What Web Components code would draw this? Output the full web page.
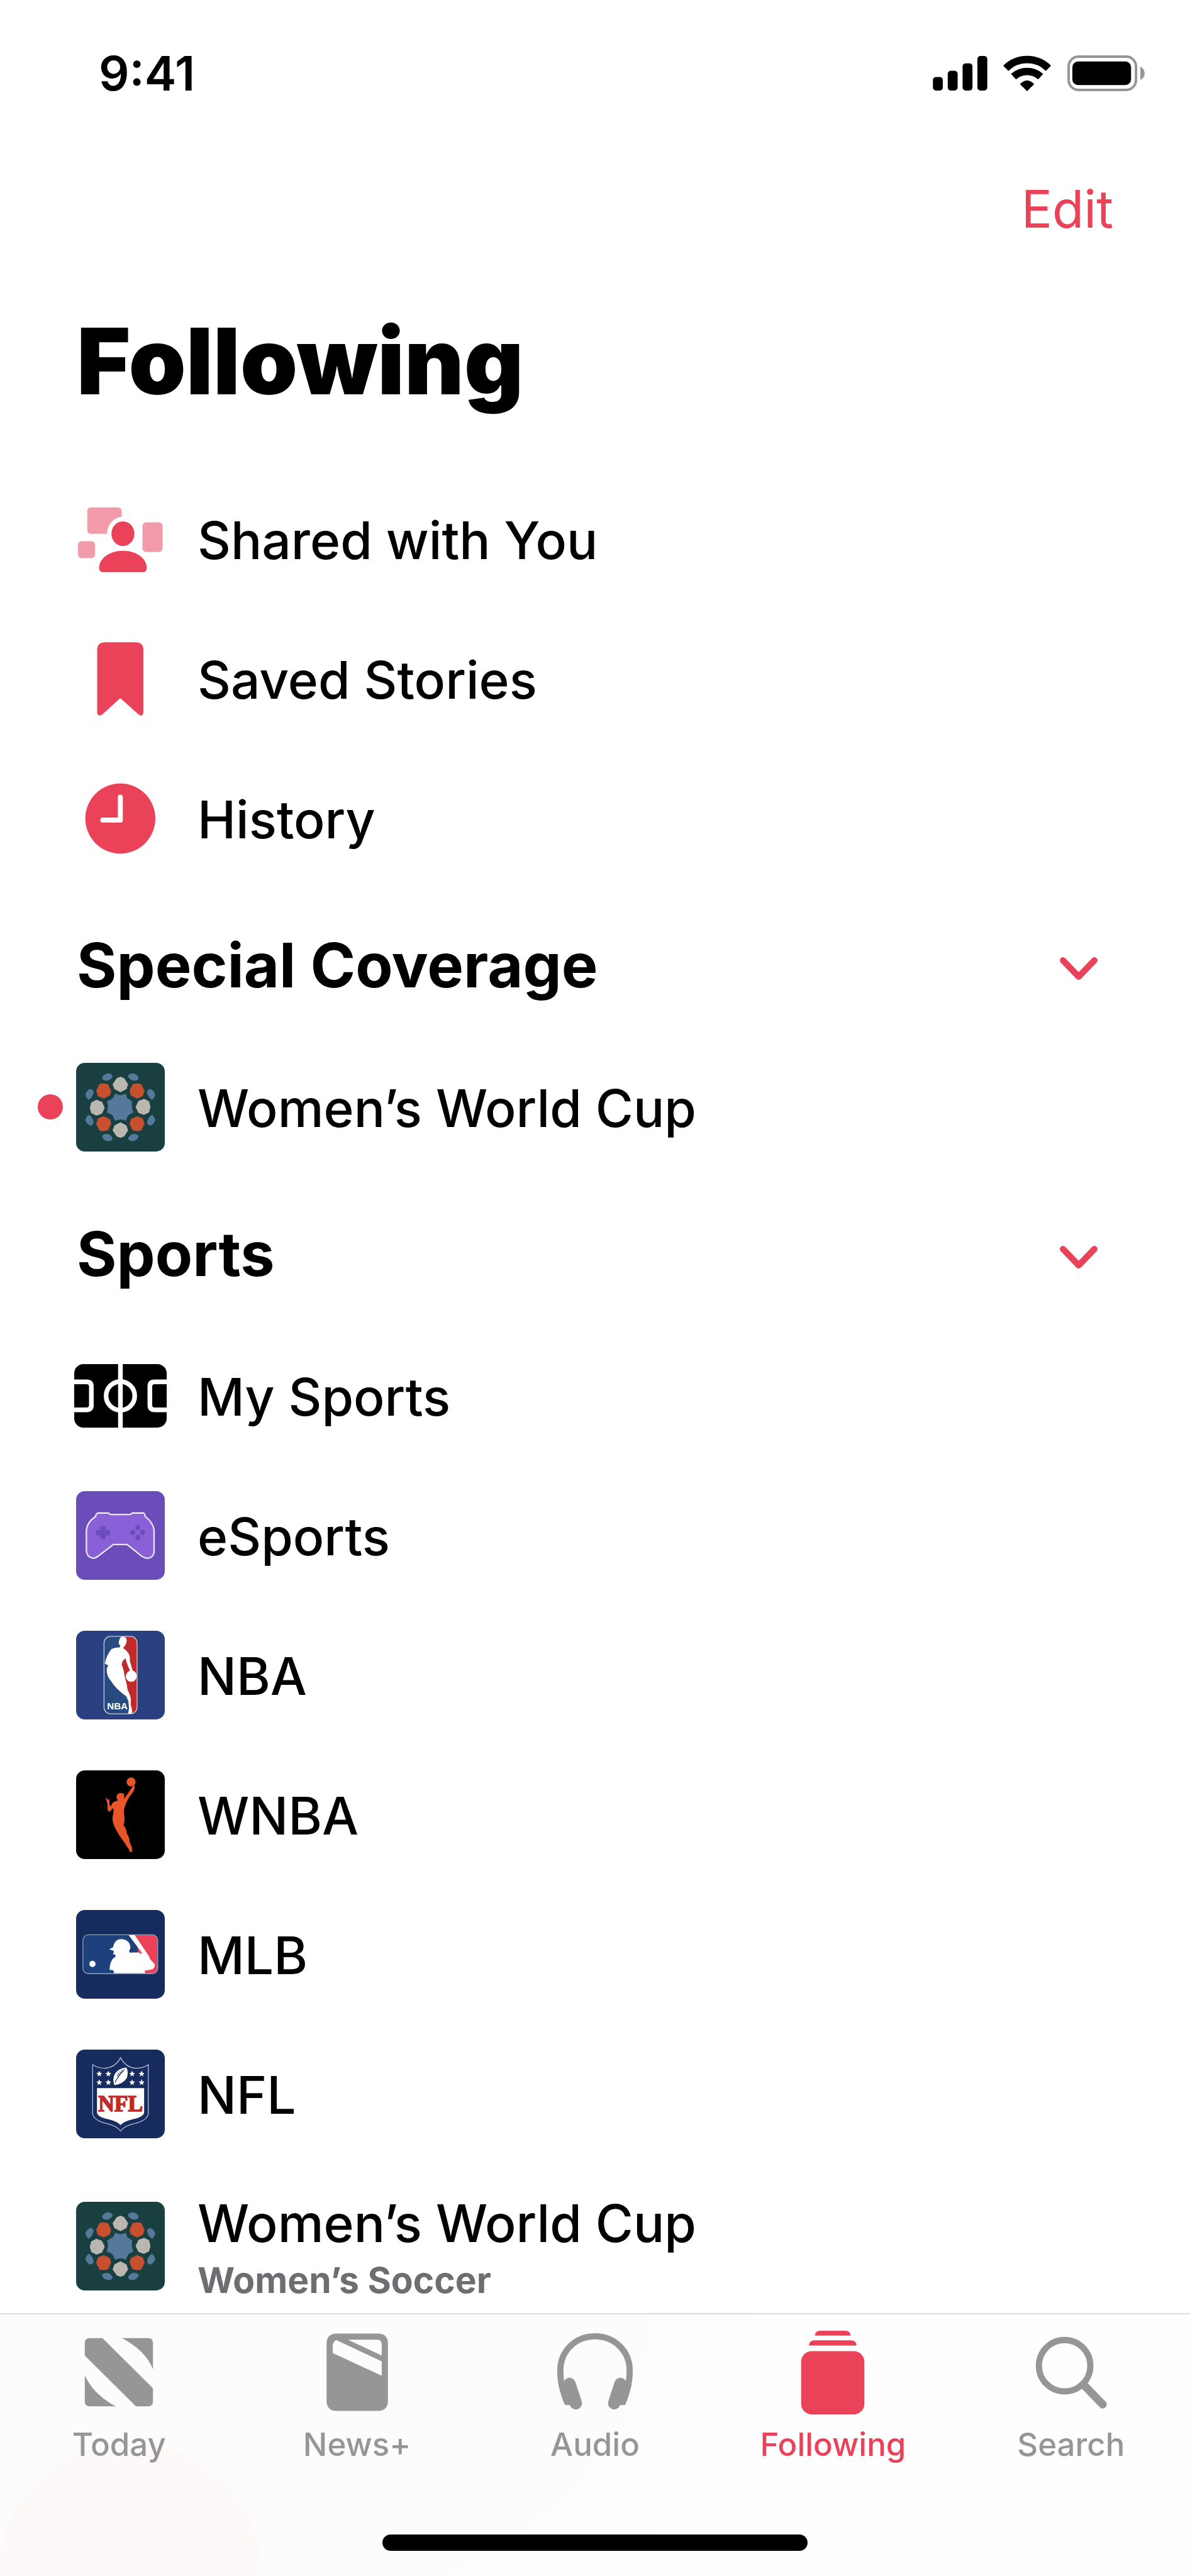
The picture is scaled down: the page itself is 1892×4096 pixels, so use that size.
<!DOCTYPE html>
<html lang="en">
<head>
<meta charset="utf-8">
<meta name="viewport" content="width=device-width, initial-scale=1">
<title>Following</title>
<style>
  :root { --accent: #ea4359; --muted: #969696; }
  html, body { margin: 0; background: #fff; }
  body { font-family: Inter, "Liberation Sans", sans-serif; color: #000; }
</style>
</head>
<body>
<news-app></news-app>

<script>
const mirrorX = 'matrix(-1 0 0 1 565 0)', mirrorY = 'matrix(1 0 0 -1 0 519)', mirrorXY = 'matrix(-1 0 0 -1 565 519)';
const star = (x, y) => `<path transform="translate(${x} ${y})" d="M0-15 4-5 14-4 6 3 9 13 0 7-9 13-6 3-14-4-4-5Z"/>`;

/* Artwork, keyed by name: [width, height, viewBox, markup] */
const ART = {
  signal: [87, 55, '0 0 88 56', '<rect y="34" width="16" height="22" rx="5"/><rect x="24" y="24" width="16" height="32" rx="5"/><rect x="48" y="12" width="16" height="44" rx="5"/><rect x="72" width="16" height="56" rx="5"/>'],
  wifi: [77, 57, '1619 88 78 58', '<g fill="none" stroke="#000" stroke-width="12"><path d="M1623 109A49 49 0 0 1 1692 109"/><path d="M1635.500 122.500A33 33 0 0 1 1679.500 122.500"/></g><path d="M1646 134.500Q1657.500 123 1669 134.500L1657.500 146Z"/>'],
  battery: [123, 57, '0 0 125 58', '<rect x="2" y="2" width="109" height="54" rx="16" fill="none" stroke="#959595" stroke-width="4"/><rect x="8" y="10" width="95" height="38" rx="9"/><path d="M118 18Q125 22 125 29T118 40Z" fill="#959595"/>'],
  chevron: [68, 46, '1706 1534 68 46', '<path d="M1715 1549 1740 1575 1765 1549" fill="none" stroke="#ea4359" stroke-width="10" stroke-linecap="round" stroke-linejoin="round"/>'],
  shared: [141, 141, '123 799 143 143', '<g fill="#f29bab"><path d="M147 819H190Q196.500 819 196.500 826V834A27 27 0 0 0 173 861.500H147Q141 861.500 141 855V826Q141 819 147 819Z"/><rect x="230" y="843" width="32.500" height="48" rx="6"/><rect x="126" y="873.500" width="27.500" height="27.500" rx="6"/></g><g fill="#ea4359"><ellipse cx="198.500" cy="861.500" rx="18.500" ry="20"/><path d="M166 923.500Q160 923.500 160 916C161 900 178 889 198.500 889S236 900 237 916Q237 923.500 231 923.500Z"/></g>'],
  saved: [141, 141, '123 1025 143 143', '<path fill="#ea4359" d="M170 1037.500H219Q231.500 1037.500 231.500 1050V1151Q230 1158 224 1154L194.300 1127.500 165 1154Q158 1158 157 1151V1050Q157 1037.500 170 1037.500Z"/>'],
  history: [141, 141, '123 1249 143 143', '<circle cx="194.300" cy="1320.500" r="56.500" fill="#ea4359"/><path d="M194.300 1286V1323H166" fill="none" stroke="#fff" stroke-width="8" stroke-linecap="round" stroke-linejoin="round"/>'],
  cup: [141, 141, '69 45 428 428', (() => {
    const q = '<path fill="#54799a" d="M194 120Q197 101 222 96 240 95 246 110 236 128 220 131 200 132 194 120ZM129 224Q112 205 115 195 122 175 140 171 156 177 153 190 148 212 129 224Z"/><path fill="#c9502e" d="M182 147 202 144 224 149 238 180 232 202 202 217 174 205 166 179Z"/>';
    return `<rect x="69" y="45" width="428" height="428" rx="42" fill="#1a3f41"/>${q}<g transform="${mirrorX}">${q}</g><g transform="${mirrorY}">${q}</g><g transform="${mirrorXY}">${q}</g>
    <path fill="#54799a" d="M258 194Q283 209 308 194L316 216 340 232Q334 258 345 284L321 298 308 325Q283 311 258 325L244 298 217 284Q228 258 218 232L247 216Z"/>
    <path fill="#bab7b0" d="M283 112 301 119 320 148 312 172 283 187 254 172 245 148 265 119ZM283 407 301 400 320 371 312 347 283 332 254 347 245 371 265 400ZM397 219 421 230 428 258 421 284 397 296 370 287 356 258 370 229ZM167 223 194 233 207 262 194 290 167 300 142 287 135 262 142 236Z"/>`;
  })()],
  pitch: [147, 101, '0 0 148.500 102', '<rect width="148.500" height="102" rx="15"/><g fill="none" stroke="#fff" stroke-width="7.500"><path d="M74.200 0V102M-4 28.500H20Q27.500 28.500 27.500 36V66Q27.500 73.500 20 73.500H-4M153 28.500H129Q121.500 28.500 121.500 36V66Q121.500 73.500 129 73.500H153"/><circle cx="74.200" cy="51" r="23"/></g>'],
  esports: [141, 141, '69 48 430 430', '<rect x="69" y="48" width="430" height="430" rx="42" fill="#6a4dbb"/><path fill="#8a60d9" stroke="#e9e8ec" stroke-width="7" stroke-linejoin="round" d="M174 154H226Q232 161 238 161H332L342 154H397Q403 160 404 171 440 197 447 235V345Q441 374 413 373 400 372 388 364L316 307H250L178 362Q165 373 150 373 122 368 119 340V235Q125 195 162 172 165 160 174 154Z"/><g fill="#6a4dbb"><path d="M187 217H212V236H233V262H214L209 279 199 285 189 279 184 262H166V236H187Z"/><circle cx="368" cy="224" r="12"/><circle cx="343" cy="248" r="12"/><rect x="381" y="236" width="21" height="23" rx="4"/><circle cx="368" cy="272" r="12"/></g>'],
  nba: [141, 141, '69 64 429 429', '<rect x="69" y="64" width="429" height="429" rx="42" fill="#2a4080"/><rect x="204" y="91" width="160" height="375" rx="32" fill="#294a80"/><path fill="#bf2b2b" d="M300 92H332Q364 92 364 124V434Q364 466 336 466L315 370 286 230 296 150Z"/><rect x="204" y="91" width="160" height="375" rx="32" fill="none" stroke="#c9cfdc" stroke-width="4"/><path fill="#fff" d="M290 93Q305 90 312 102 316 115 309 130 303 140 296 148 315 160 325 178 332 195 329 210 336 235 342 256 362 263 362 285 358 310 335 311 312 308 309 285 312 265 330 256 318 235 308 198 293 205 290 227 302 260 305 290 315 320 318 350 331 375 334 395L333 420 340 450 340 465H320L325 440 322 405 312 382Q260 345 235 303 222 290 217 260 216 240 226 234L208 222Q215 185 240 152 262 144 280 145L283 137Q270 125 278 110 280 96 290 93Z"/><text x="219" y="443" font-family="Liberation Sans" font-weight="700" font-size="46" fill="#fff">NBA</text>'],
  wnba: [141, 141, '69 740 429 429', '<rect x="69" y="740" width="429" height="429" rx="42"/><g fill="#e9552b"><circle cx="335" cy="796" r="21.500"/><path d="M352 810Q354 835 342 848 318 875 306 912 297 935 302 960 306 985 298 1005 312 1020 314 1045 328 1065 328 1088 342 1110 341 1132L331 1136Q325 1120 314 1108 308 1095 300 1085 280 1060 258 1020 240 985 247 957 253 940 248 922L231 940Q218 940 221 905L212 871 221 879 228 884 231 878 230 905 237 916Q242 893 262 888L272 885Q260 875 267 858 275 847 290 850 300 850 301 856 304 865 299 880L318 855Q330 835 342 818Z"/></g>'],
  mlb: [141, 141, '69 66 429 429', '<rect x="69" y="66" width="429" height="429" rx="42" fill="#162c5e"/><rect x="102" y="186" width="362" height="188" rx="26" fill="#1d417c"/><path fill="#ea4359" d="M353 187H438Q463 187 463 213V347Q463 373 438 373H390Z"/><rect x="102" y="186" width="362" height="188" rx="26" fill="none" stroke="#91a0ba" stroke-width="4"/><g fill="#fff"><circle cx="148" cy="327" r="15"/><path d="M323 188H353L418 284Q424 292 426 303L448 327Q454 338 440 352 428 357 402 358V372H252Q252 360 247 357L231 356Q231 325 243 308 248 298 260 292L258 282 247 280 252 268 249 262Q238 261 229 256L248 246Q252 222 268 211 290 202 310 212 331 222 332 250L326 263 328 272 370 271 385 279Q388 272 382 265Z"/></g>'],
  nfl: [141, 141, '69 742 429 429', `<rect x="69" y="742" width="429" height="429" rx="42" fill="#162c5e"/><path fill="none" stroke="#b5bed0" stroke-width="4" d="M284 781Q310 830 360 832 395 832 418 815V1050Q415 1085 350 1100 300 1112 284 1136 268 1112 218 1100 152 1085 149 1050V815Q175 832 205 832 258 830 284 781Z"/><path fill="#fff" d="M170 928H398V1048Q395 1068 340 1080 300 1090 284 1107 268 1090 228 1080 172 1068 170 1048Z"/><g fill="#fff">${[181, 225, 340, 386].map(x => star(x, 859) + star(x, 901)).join('')}<path d="M312 829Q325 850 313 882 292 910 255 914 243 890 256 860 276 832 312 829Z"/></g><path d="M304 836Q275 865 257 902M272 855 282 866M279 848 289 859M287 841 297 852M267 863 275 873" fill="none" stroke="#162c5e" stroke-width="3.500"/><text x="284" y="1040" text-anchor="middle" font-family="Liberation Serif" font-weight="700" font-size="108" fill="#bf2b2b" stroke="#bf2b2b" stroke-width="5">NFL</text>`],
  today: [136, 136, '0 0 138 138', '<path d="M22 14H42.500L124 95V116Q124 124 116 124H96.500L14 42V22Q14 14 22 14ZM74 14H116Q124 14 124 22V64Q112 34 74 14ZM14 74Q28 105 64 124H22Q14 124 14 116Z"/>'],
  newsplus: [136, 136, '0 0 138 138', '<path fill-rule="evenodd" d="M36 6.500H102Q118.500 6.500 118.500 23V115Q118.500 131.500 102 131.500H36Q19.500 131.500 19.500 115V23Q19.500 6.500 36 6.500ZM54 16.500 108.500 42V24Q108.500 16.500 101 16.500ZM35 17Q29.500 20 29.500 26V38L108.500 74.500V51.500Z"/>'],
  audio: [136, 136, '0 0 138 138', '<path d="M25 120C15 96 13 82 13 67 13 34 38 11 69 11S125 34 125 67C125 82 123 96 113 120" fill="none" stroke="currentColor" stroke-width="10"/><path d="M28 88 38 119M110 88 100 119" fill="none" stroke="currentColor" stroke-width="20" stroke-linecap="round"/><path d="M12 78 30 122H22ZM126 78 108 122H116Z"/>'],
  following: [136, 136, '0 0 138 138', '<rect x="18" y="35" width="102" height="102" rx="17"/><path d="M30.500 26Q31 17.500 40 17.500H98Q107 17.500 107.500 26ZM40 10Q40.500 2 49 2H89Q97.500 2 98 10Z"/>'],
  search: [136, 136, '0 0 138 138', '<circle cx="58.500" cy="58.500" r="41.500" fill="none" stroke="currentColor" stroke-width="10"/><path d="M91 91 120 121" stroke="currentColor" stroke-width="13" stroke-linecap="round"/>']
};

class BaseElement extends HTMLElement {
  constructor() { super(); this.attachShadow({ mode: 'open' }); }
  connectedCallback() { this.shadowRoot.innerHTML = this.render(); }
}

customElements.define('news-icon', class extends BaseElement {
  render() {
    const [w, h, box, art] = ART[this.getAttribute('name')];
    return `<style>:host{display:block;flex:none}svg{display:block}</style>
      <svg width="${w}" height="${h}" viewBox="${box}" fill="currentColor" aria-hidden="true">${art}</svg>`;
  }
});

customElements.define('status-bar', class extends BaseElement {
  render() {
    return `<style>
      :host{display:flex;align-items:center;justify-content:space-between;height:232px;padding:0 72px 0 157px}
      time{font-size:76px;line-height:90px;font-weight:600}
      div{display:flex;align-items:center;gap:25px}
    </style><time>9:41</time>
    <div><news-icon name="signal"></news-icon><news-icon name="wifi"></news-icon><news-icon name="battery"></news-icon></div>`;
  }
});

customElements.define('nav-bar', class extends BaseElement {
  render() {
    return `<style>
      :host{display:block}
      div{display:flex;align-items:center;justify-content:flex-end;height:202px;padding:0 122px}
      button{border:0;background:none;padding:0;font:inherit;font-size:82px;line-height:100px;color:var(--accent)}
      h1{margin:0;padding:50px 122px 82px;font-size:146px;line-height:180px;font-weight:900}
    </style><div><button type="button">Edit</button></div><h1><slot></slot></h1>`;
  }
});

customElements.define('follow-section', class extends BaseElement {
  render() {
    const title = this.getAttribute('heading');
    return `<style>
      :host{display:block}
      h2{margin:0;font:inherit}
      button{display:flex;align-items:center;justify-content:space-between;box-sizing:border-box;width:100%;height:237px;
        padding:8px 143px 0 122px;border:0;background:none;font:inherit;font-size:97px;font-weight:700;line-height:120px;color:inherit;text-align:left}
    </style>${title ? `<h2><button type="button" aria-expanded="true">${title}<news-icon name="chevron"></news-icon></button></h2>` : ''}<slot></slot>`;
  }
});

customElements.define('follow-row', class extends BaseElement {
  render() {
    const sub = this.getAttribute('detail');
    return `<style>
      :host{display:block}
      a{display:grid;grid-template-columns:40px 18px 147px 1fr;align-items:center;height:222px;padding-left:60px;color:inherit;text-decoration:none}
      a.tall{height:auto;padding-top:41px;padding-bottom:16px}
      i{grid-column:1;width:40px;height:40px;border-radius:50%;background:var(--accent)}
      .art{grid-column:3;display:flex;justify-content:center}
      .text{grid-column:4;padding:4px 0 0 49px;font-size:82px;line-height:109px;font-weight:500}
      span{display:block}
      small{display:block;font-size:57px;line-height:72px;font-weight:700;color:#6d6e71}
      .tall .text{padding-top:0}
    </style><a href="#" class="${sub ? 'tall' : ''}">${this.hasAttribute('unread') ? '<i></i>' : ''}
      <div class="art"><news-icon name="${this.getAttribute('icon')}"></news-icon></div>
      <div class="text"><span><slot></slot></span>${sub ? `<small>${sub}</small>` : ''}</div></a>`;
  }
});

customElements.define('tab-item', class extends BaseElement {
  render() {
    return `<style>
      :host{display:block;flex:1 1 0;min-width:0}
      a{display:flex;flex-direction:column;align-items:center;gap:15px;color:var(--muted);text-decoration:none;font-size:51px;line-height:64px;font-weight:500}
      a[aria-current]{color:var(--accent)}
    </style><a href="#" ${this.hasAttribute('active') ? 'aria-current="page"' : ''}><news-icon name="${this.getAttribute('icon')}"></news-icon><slot></slot></a>`;
  }
});

customElements.define('tab-bar', class extends BaseElement {
  render() {
    return `<style>
      :host{display:block;border-top:2px solid #dcdcdc;padding:24px 0 40px;
        background:radial-gradient(circle 212px at 207px 100%,#fdf9f8 99%,transparent 100%),
          radial-gradient(ellipse 735px 500px at 300px 0,#fcfcfc 99%,transparent 100%),
          radial-gradient(ellipse 900px 640px at 300px 0,#fdfdfd 99%,transparent 100%),#fefefe}
      nav{display:flex;padding-bottom:111px}
      div{width:676px;height:26px;margin:0 auto;border-radius:13px;background:#000}
    </style><nav><slot></slot></nav><div></div>`;
  }
});

customElements.define('news-app', class extends BaseElement {
  render() {
    return `<style>
      :host{display:flex;flex-direction:column;min-height:100vh}
      main{flex:1}
    </style>
    <status-bar></status-bar>
    <main>
      <nav-bar>Following</nav-bar>
      <follow-section>
        <follow-row icon="shared">Shared with You</follow-row>
        <follow-row icon="saved">Saved Stories</follow-row>
        <follow-row icon="history">History</follow-row>
      </follow-section>
      <follow-section heading="Special Coverage">
        <follow-row icon="cup" unread>Women’s World Cup</follow-row>
      </follow-section>
      <follow-section heading="Sports">
        <follow-row icon="pitch">My Sports</follow-row>
        <follow-row icon="esports">eSports</follow-row>
        <follow-row icon="nba">NBA</follow-row>
        <follow-row icon="wnba">WNBA</follow-row>
        <follow-row icon="mlb">MLB</follow-row>
        <follow-row icon="nfl">NFL</follow-row>
        <follow-row icon="cup" detail="Women’s Soccer">Women’s World Cup</follow-row>
      </follow-section>
    </main>
    <tab-bar>
      <tab-item icon="today">Today</tab-item>
      <tab-item icon="newsplus">News+</tab-item>
      <tab-item icon="audio">Audio</tab-item>
      <tab-item icon="following" active>Following</tab-item>
      <tab-item icon="search">Search</tab-item>
    </tab-bar>`;
  }
});
</script>
</body>
</html>
